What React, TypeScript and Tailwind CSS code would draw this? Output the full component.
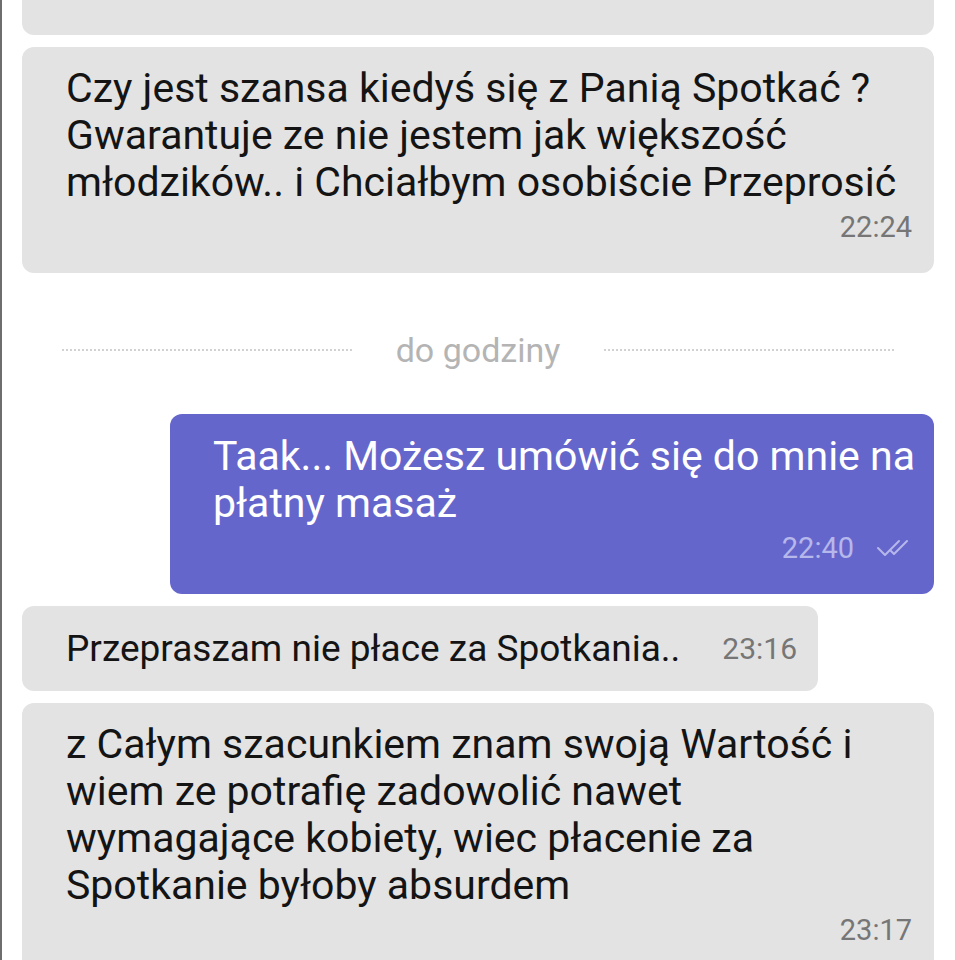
import React from "react";

const font = { fontFamily: "Roboto, 'Noto Sans', sans-serif" };

function Time({ t, light, big }: { t: string; light?: boolean; big?: boolean }) {
  return (
    <span
      className={`${big ? "text-[30px]" : "text-[29px]"} leading-[34px] ${
        light ? "text-[#b6b7ea]" : "text-[#767676]"
      }`}
    >
      {t}
    </span>
  );
}

function DoubleCheck() {
  return (
    <svg width="36" height="20" viewBox="0 0 36 20" fill="none" className="ml-[22px]">
      <path d="M2 10 L9 17 L23 3" stroke="#b6b7ea" strokeWidth="2" strokeLinecap="round" strokeLinejoin="round" />
      <path d="M15 13 L18 16 L31 3" stroke="#b6b7ea" strokeWidth="2" strokeLinecap="round" strokeLinejoin="round" />
    </svg>
  );
}

function Lines({ lines, small }: { lines: string[]; small?: boolean }) {
  return (
    <div className={`${small ? "text-[37px]" : "text-[41px]"} leading-[47px]`}>
      {lines.map((l) => (
        <div key={l} className="whitespace-nowrap">
          {l}
        </div>
      ))}
    </div>
  );
}

export default function App() {
  return (
    <div
      style={font}
      className="h-[960px] w-[955px] overflow-hidden bg-white border-l-2 border-[#6e6e6e] pl-5 pr-[21px] text-[#141414]"
    >
      <div className="flex flex-col gap-3">
        {/* previous message, scrolled mostly out of view */}
        <div className="-mt-[40px] rounded-xl bg-[#e3e3e3] pr-[22px] pb-[33px] pt-[8px] flex justify-end">
          <Time t="22:17" />
        </div>

        <div className="rounded-xl bg-[#e3e3e3] pl-[44px] pr-[22px] pt-[18px] pb-[29px]">
          <Lines
            lines={[
              "Czy jest szansa kiedyś się z Panią Spotkać ?",
              "Gwarantuje ze nie jestem jak większość",
              "młodzików.. i Chciałbym osobiście Przeprosić",
            ]}
          />
          <div className="mt-1 flex justify-end">
            <Time t="22:24" />
          </div>
        </div>

        <div className="flex items-center justify-center h-[117px] pt-[12px]">
          <div className="w-[290px] border-t-2 border-dotted border-[#d2d2d2]" />
          <span className="mx-[44px] text-[34px] leading-[40px] text-[#b4b4b4]">do godziny</span>
          <div className="w-[290px] border-t-2 border-dotted border-[#d2d2d2]" />
        </div>

        <div className="ml-[148px] rounded-xl bg-[#6566cc] pl-[43px] pr-[22px] pt-[19px] pb-[29px] text-white">
          <Lines lines={["Taak... Możesz umówić się do mnie na", "płatny masaż"]} />
          <div className="mt-1 flex items-center justify-end">
            <Time t="22:40" light />
            <DoubleCheck />
          </div>
        </div>

        <div className="self-start w-[796px] rounded-xl bg-[#e3e3e3] pl-[44px] pr-[21px] py-[19px] flex items-center justify-between">
          <Lines small lines={["Przepraszam nie płace za Spotkania.."]} />
          <Time t="23:16" big />
        </div>

        <div className="rounded-xl bg-[#e3e3e3] pl-[44px] pr-[22px] pt-[18px] pb-[29px]">
          <Lines
            lines={[
              "z Całym szacunkiem znam swoją Wartość i",
              "wiem ze potrafię zadowolić nawet",
              "wymagające kobiety, wiec płacenie za",
              "Spotkanie byłoby absurdem",
            ]}
          />
          <div className="mt-1 flex justify-end">
            <Time t="23:17" />
          </div>
        </div>
      </div>
    </div>
  );
}
